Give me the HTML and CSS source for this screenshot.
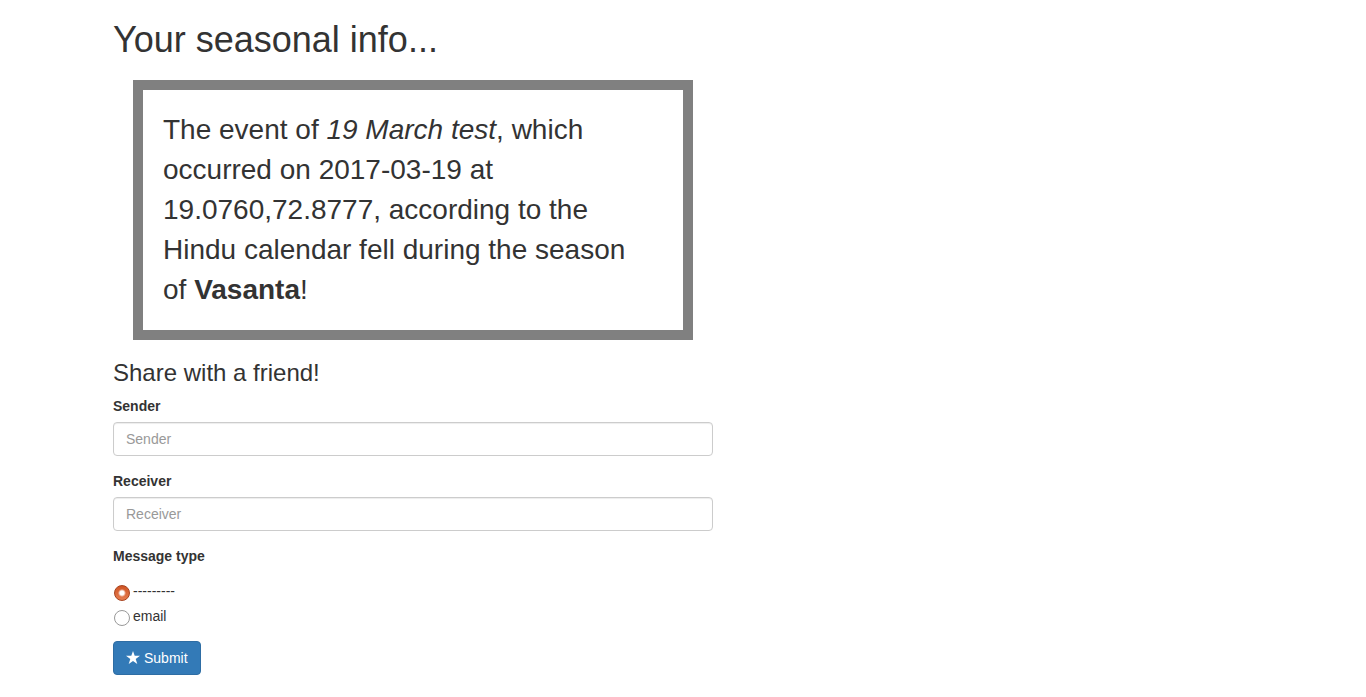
FILE: index.html
```html
<!DOCTYPE html>
<html lang="en">
<head>
<meta charset="utf-8">
<title>Your seasonal info</title>
<link rel="stylesheet" href="styles.css">
</head>
<body>
<main class="container">
  <h1 class="title">Your seasonal info...</h1>
  <p class="result">The event of <em>19 March test</em>, which occurred on 2017-03-19 at 19.0760,72.8777, according to the Hindu calendar fell during the season of <strong>Vasanta</strong>!</p>
  <h3 class="subtitle">Share with a friend!</h3>
  <form class="share-form">
    <div class="form-group">
      <label class="label" for="sender">Sender</label>
      <input class="form-control" id="sender" type="text" placeholder="Sender">
    </div>
    <div class="form-group">
      <label class="label" for="receiver">Receiver</label>
      <input class="form-control" id="receiver" type="text" placeholder="Receiver">
    </div>
    <fieldset class="choices">
      <legend class="label">Message type</legend>
      <label class="choice"><input class="radio" type="radio" name="type" checked><span>---------</span></label>
      <label class="choice"><input class="radio" type="radio" name="type"><span>email</span></label>
    </fieldset>
    <button class="submit" type="button">
      <svg class="star" viewBox="0 0 14 14" aria-hidden="true"><path d="M7 0l1.700 4.700H14L9.700 7.900 11.300 13 7 9.900 2.700 13 4.300 7.900 0 4.700h5.300z"/></svg>
      <span>Submit</span>
    </button>
  </form>
</main>
</body>
</html>
```
FILE: styles.css
```css
* {
  box-sizing: border-box;
}

body {
  margin: 0;
  background: #fff;
  color: #333;
  font-family: "Liberation Sans", Arial, sans-serif;
  font-size: 14px;
  line-height: 20px;
}

.container {
  max-width: 1170px;
  margin: 0 auto;
  padding: 20px 15px;
}

.title {
  margin: 0 0 20px;
  font-size: 36px;
  font-weight: 500;
  line-height: 40px;
}

.result {
  max-width: 560px;
  margin: 0 20px 20px;
  padding: 20px 30px 20px 20px;
  border: 10px solid gray;
  font-size: 28px;
  line-height: 40px;
}

.subtitle {
  margin: 0 0 10px;
  font-size: 24px;
  font-weight: 500;
  line-height: 26px;
}

.share-form {
  max-width: 600px;
}

.form-group {
  margin-bottom: 15px;
}

.label {
  display: block;
  margin-bottom: 6px;
  padding: 0;
  font-weight: 700;
}

.form-control {
  display: block;
  width: 100%;
  height: 34px;
  padding: 6px 12px;
  border: 1px solid #ccc;
  border-radius: 4px;
  background: #fff;
  box-shadow: inset 0 1px 1px rgba(0, 0, 0, .075);
  color: #555;
  font: inherit;
}

.form-control::placeholder {
  color: #999;
}

.choices {
  margin: 0 0 10px;
  padding: 9px 0 0;
  border: 0;
}

.choice {
  display: flex;
  gap: 3px;
  margin-bottom: 5px;
}

.radio {
  appearance: none;
  width: 16px;
  height: 16px;
  margin: 4px 0 0 1px;
  border: 1px solid #999;
  border-radius: 50%;
  background: #fff;
}

.radio:checked {
  border-color: #a8421d;
  background: radial-gradient(circle, #fff 2px, transparent 4px), linear-gradient(#cf5424, #e67e50);
}

.submit {
  display: flex;
  align-items: center;
  gap: 4px;
  height: 34px;
  padding: 6px 12px;
  border: 1px solid #2e6da4;
  border-radius: 4px;
  background: #337ab7;
  color: #fff;
  font: inherit;
}

.star {
  width: 14px;
  height: 14px;
  fill: currentColor;
}
```
